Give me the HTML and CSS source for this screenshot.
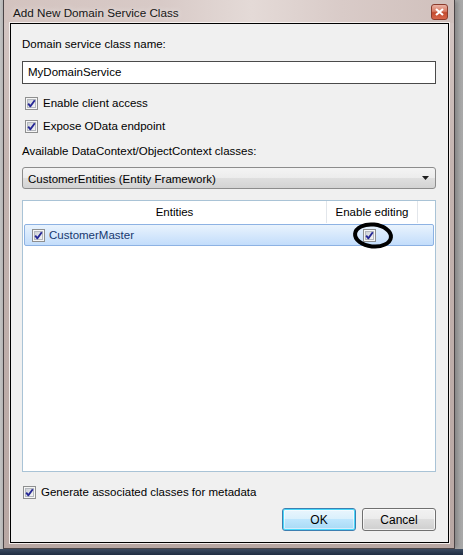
FILE: index.html
```html
<!DOCTYPE html>
<html lang="en">
<head>
<meta charset="UTF-8" />
<meta name="viewport" content="width=device-width, initial-scale=1" />
<title>Add New Domain Service Class</title>
<link rel="stylesheet" href="styles.css">
</head>
<body>
  <!-- shared checkbox glyph -->
  <svg class="defs" width="0" height="0">
    <defs>
      <linearGradient id="cbFill" x1="0" y1="0" x2="1" y2="1">
        <stop offset="0" stop-color="#cbcfd5" />
        <stop offset="1" stop-color="#f7f7f7" />
      </linearGradient>
      <symbol id="cbOn" viewBox="0 0 13 13">
        <rect x="0.5" y="0.5" width="12" height="12" fill="#f6f6f6" stroke="#8e8f8f" />
        <rect x="2.5" y="2.5" width="8" height="8" fill="url(#cbFill)" stroke="#b4b8be" />
        <path d="M3.2 6.6 L5.4 9.3 L9.8 3.2" fill="none" stroke="#262896" stroke-width="1.9" stroke-linejoin="round" />
      </symbol>
    </defs>
  </svg>

  <div class="window">
    <div class="titlebar">
      <span class="caption">Add New Domain Service Class</span>
      <span class="close">
        <svg width="9" height="8" viewBox="0 0 9 8"><path d="M1 1 L8 7 M8 1 L1 7" stroke="#fff" stroke-width="2.2" /></svg>
      </span>
    </div>

    <div class="client">
      <div class="field-label">Domain service class name:</div>
      <div class="textbox">MyDomainService</div>

      <div class="check-row indent first">
        <svg class="cb"><use href="#cbOn" /></svg>
        <span>Enable client access</span>
      </div>
      <div class="check-row indent">
        <svg class="cb"><use href="#cbOn" /></svg>
        <span>Expose OData endpoint</span>
      </div>

      <div class="field-label ctx">Available DataContext/ObjectContext classes:</div>
      <div class="combo">
        <span>CustomerEntities (Entity Framework)</span>
        <svg width="7" height="4" viewBox="0 0 7 4"><path d="M0 0 H7 L3.5 4 Z" fill="#1e1e1e" /></svg>
      </div>

      <div class="listview">
        <div class="lv-header">
          <div class="col-name">Entities</div>
          <div class="col-edit">Enable editing</div>
          <div class="col-fill"></div>
        </div>
        <div class="lv-row selected">
          <div class="cell-name">
            <svg class="cb"><use href="#cbOn" /></svg>
            <span>CustomerMaster</span>
          </div>
          <div class="cell-edit">
            <svg class="cb"><use href="#cbOn" /></svg>
          </div>
        </div>
        <!-- hand-drawn ring around the editing box -->
        <svg class="ring" width="42" height="29" viewBox="0 0 42 29">
          <ellipse cx="21" cy="14.5" rx="18" ry="11" fill="none" stroke="#000" stroke-width="4" transform="rotate(6 21 14.5)" />
        </svg>
      </div>

      <div class="check-row meta">
        <svg class="cb"><use href="#cbOn" /></svg>
        <span>Generate associated classes for metadata</span>
      </div>

      <div class="buttons">
        <button class="btn default">OK</button>
        <button class="btn">Cancel</button>
      </div>
    </div>
  </div>
  <div class="taskbar"></div>
</body>
</html>
```

FILE: styles.css
```css
* {
  box-sizing: border-box;
}
body {
  margin: 0;
  height: 555px;
  overflow: hidden;
  background: linear-gradient(90deg, #c4c4c4 0px, #b9b9b9 3px, #b4b4b4 455px, #a9a9a9 463px);
  font-family: "Liberation Sans", Arial, sans-serif;
  font-size: 11.5px;
  color: #000;
}
.defs {
  position: absolute;
}
.window {
  margin-left: 3px;
  width: 452px;
  height: 549px;
  padding: 0 5px 5px 6px;
  border: 1px solid #4a4446;
  border-top: none;
  background: linear-gradient(180deg, #d6c8c5 0%, #c4b4b0 30%, #b8a7a3 100%);
  box-shadow: 3px 0 5px rgba(40, 40, 40, 0.35);
}
.titlebar {
  height: 23px;
  display: flex;
  align-items: center;
  justify-content: space-between;
  margin: 0 -5px 0 -6px;
  padding: 0 6px 0 9px;
  background: linear-gradient(90deg, #d3c3bf 0%, #d8cac7 35%, #e4dad7 55%, #d9cbc8 75%, #d0c0bc 100%);
}
.caption {
  padding-top: 2px;
  font-size: 11.7px;
  color: #161616;
  text-shadow: 0 0 6px rgba(255, 255, 255, 0.8);
}
.close {
  width: 17px;
  height: 16px;
  border: 1px solid #8a3b2c;
  border-radius: 3px;
  margin-top: 1px;
  display: flex;
  align-items: center;
  justify-content: center;
  background: linear-gradient(180deg, #eab3a5 0%, #d77a63 45%, #c24a2e 55%, #d8664a 100%);
}
.client {
  height: 520px;
  padding: 13px 12px 11px 11px;
  border: 1px solid #000;
  background: #f0f0f0;
  box-shadow: 0 0 0 1px rgba(250, 246, 245, 0.85);
  display: flex;
  flex-direction: column;
  position: relative;
}
.field-label {
  line-height: 15px;
  height: 15px;
}
.field-label.ctx {
  margin-top: 10px;
}
.textbox {
  margin-top: 9px;
  height: 23px;
  line-height: 21px;
  border: 1px solid #4a4a4a;
  background: #fff;
  padding-left: 5px;
}
.check-row {
  display: flex;
  align-items: center;
  gap: 5px;
  height: 15px;
  line-height: 15px;
  margin-top: 8px;
}
.check-row.indent {
  margin-left: 3px;
}
.check-row.first {
  margin-top: 12px;
}
.check-row.meta {
  margin-top: 13px;
  margin-left: 1px;
}
.cb {
  width: 13px;
  height: 13px;
  flex: none;
}
.combo {
  margin-top: 8px;
  height: 22px;
  border: 1px solid #8c8c8c;
  border-radius: 3px;
  padding: 0 6px 0 5px;
  display: flex;
  align-items: center;
  justify-content: space-between;
  background: linear-gradient(180deg, #f4f4f4 0%, #ececec 50%, #dfdfdf 50%, #d3d3d3 100%);
}
.combo span {
  padding-top: 1px;
}
.listview {
  margin-top: 11px;
  height: 272px;
  border: 1px solid #a9c3d6;
  background: #fff;
  position: relative;
}
.lv-header {
  display: flex;
  height: 22px;
  line-height: 23px;
  background: #fff;
}
.col-name {
  width: 304px;
  border-right: 1px solid #e2e6eb;
  text-align: center;
}
.col-edit {
  width: 91px;
  border-right: 1px solid #e2e6eb;
  text-align: center;
}
.col-fill {
  flex: 1;
}
.lv-row {
  margin: 1px 1px 0 1px;
  height: 22px;
  display: flex;
  align-items: center;
}
.lv-row.selected {
  border: 1px solid #8db2e3;
  border-radius: 2px;
  background: linear-gradient(180deg, #e9f3fd 0%, #d6e8fc 50%, #c3ddfb 100%);
}
.cell-name {
  width: 302px;
  padding-left: 7px;
  display: flex;
  align-items: center;
  gap: 4px;
  color: #17386e;
}
.cell-edit {
  padding-left: 36px;
  display: flex;
  align-items: center;
}
.ring {
  position: absolute;
  left: 329px;
  top: 20px;
}
.buttons {
  margin-top: 8px;
  display: flex;
  justify-content: flex-end;
  gap: 6px;
}
.btn {
  width: 74px;
  height: 23px;
  padding: 0;
  font-family: inherit;
  font-size: 12px;
  color: #000;
  border: 1px solid #707070;
  border-radius: 3px;
  background: linear-gradient(180deg, #f2f2f2 0%, #ebebeb 50%, #dddddd 50%, #cfcfcf 100%);
  box-shadow: inset 0 0 0 1px rgba(255, 255, 255, 0.7);
}
.btn.default {
  border-color: #3c7fb1;
  background: linear-gradient(180deg, #eaf6fd 0%, #d9f0fc 50%, #bee6fd 50%, #a7d9f5 100%);
  box-shadow: inset 0 0 0 1px #48d8fb, inset 0 0 0 2px rgba(255, 255, 255, 0.5);
}
.taskbar {
  height: 6px;
  background: linear-gradient(180deg, #3a4a60 0%, #1f2d42 100%);
}
```
